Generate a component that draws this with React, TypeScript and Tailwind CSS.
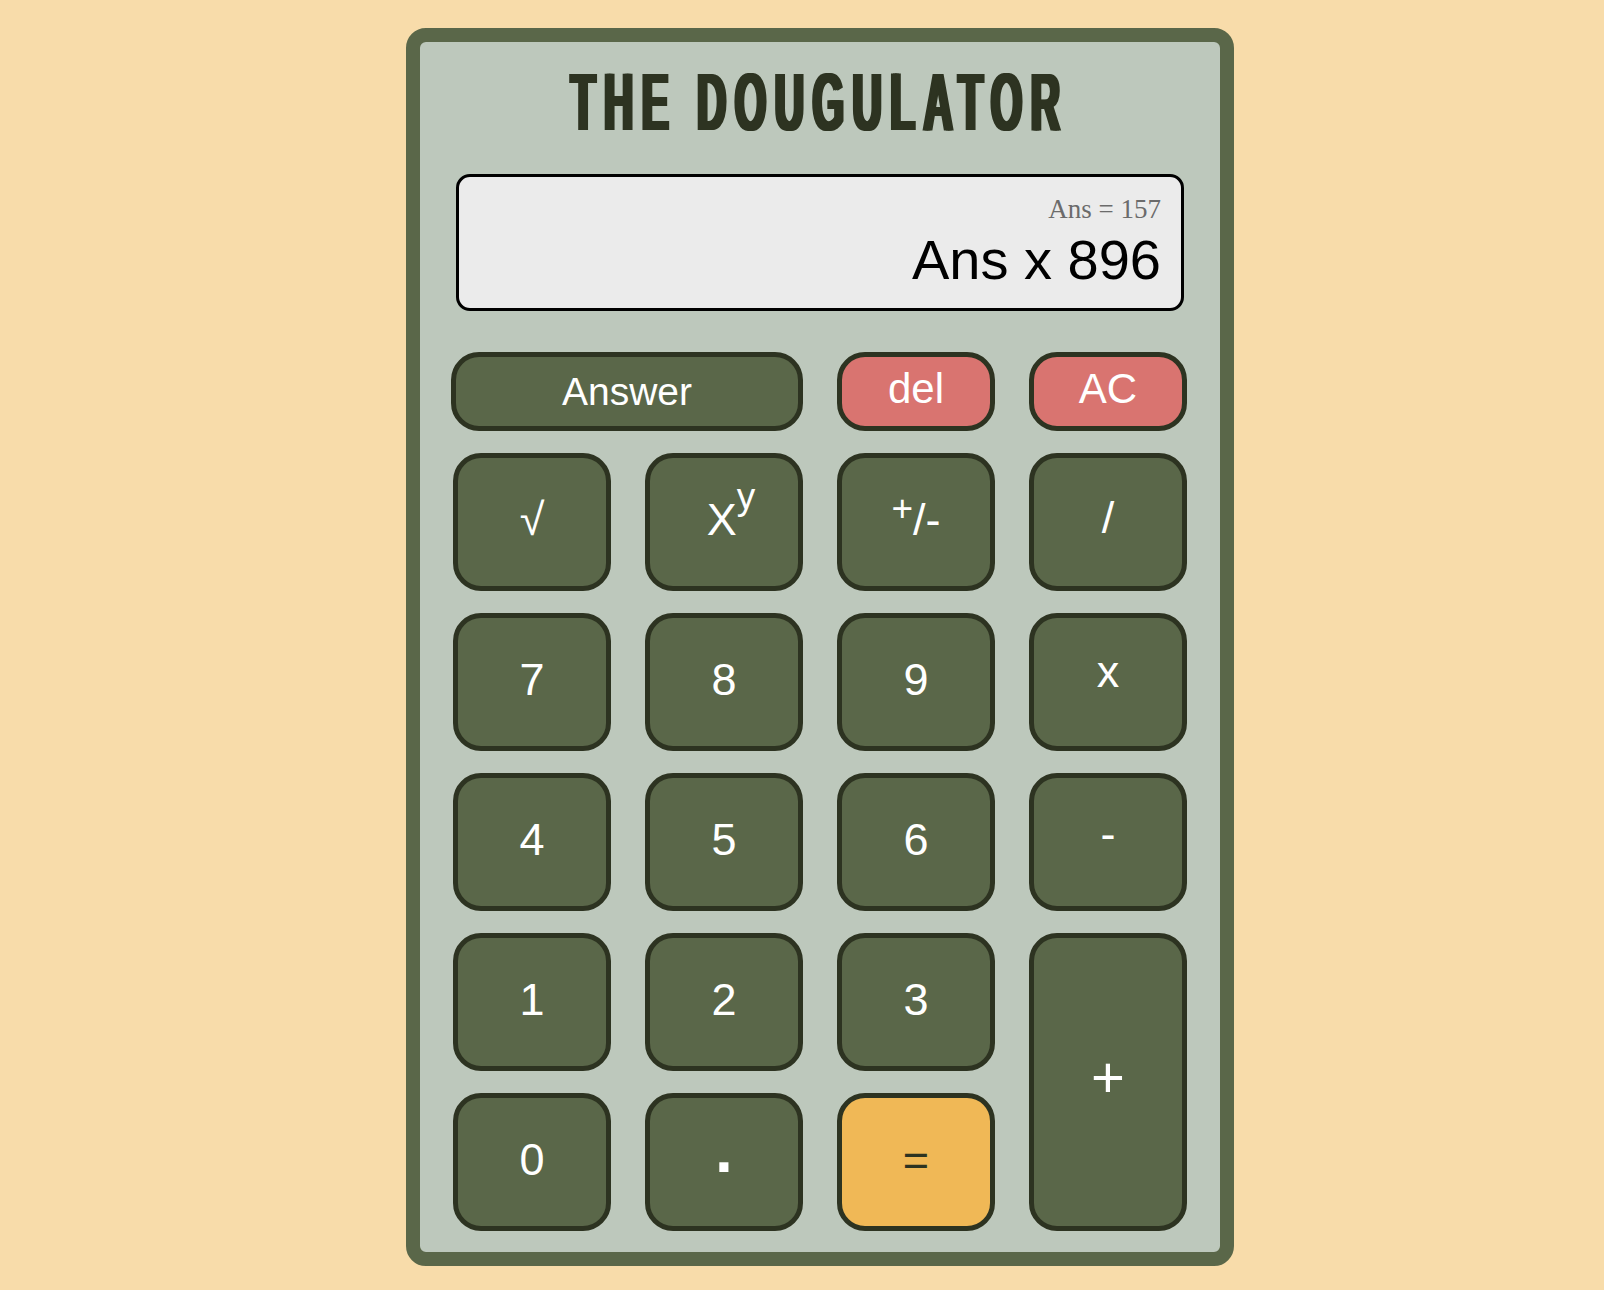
const sans = "font-['Liberation_Sans',Arial,sans-serif]";

const keyBase =
  "flex items-center justify-center rounded-[28px] border-[5px] border-[#2d3321] leading-none " + sans;

type KeyProps = {
  children: React.ReactNode;
  className?: string;
};

const Key = ({ children, className = "" }: KeyProps) => (
  <button className={`${keyBase} ${className}`}>{children}</button>
);

// default dark green key
const green = "bg-[#5a6749] text-white text-[45px]";

const App = () => {
  return (
    <div className="min-h-screen bg-[#f8dcaa] flex justify-center pl-[36px] pt-[28px] pb-[25px]">
      <div className="w-[828px] rounded-[20px] border-[14px] border-[#5a6749] bg-[#bdc8bc] px-[33px] pt-[20px] pb-[21px]">
        {/* Title */}
        <div className="flex justify-center">
          <h1 className="inline-block whitespace-nowrap scale-x-[0.5] font-['Liberation_Sans',Arial,sans-serif] font-bold text-[81px] leading-none tracking-[17px] text-[#2d3321] [text-shadow:4px_0_0_#2d3321,-4px_0_0_#2d3321]">
            THE DOUGULATOR
          </h1>
        </div>

        {/* Display */}
        <div className="mt-[31px] mx-[3px] h-[137px] rounded-[14px] border-[3px] border-black bg-[#ebebeb] flex flex-col items-end pt-[19px] pr-[20px]">
          <div className="font-['Liberation_Serif','Times_New_Roman',serif] text-[27px] leading-none text-[#6b6b6b]">
            Ans = 157
          </div>
          <div className={`mt-[9px] text-[56px] leading-none text-black ${sans}`}>Ans x 896</div>
        </div>

        {/* Keys */}
        <div className="mt-[41px] grid grid-cols-[repeat(4,158px)] grid-rows-[79px_repeat(5,138px)] gap-x-[34px] gap-y-[22px]">
          <Key className="col-span-2 -ml-[2px] bg-[#5a6749] text-white text-[39px]">Answer</Key>
          <Key className="pb-[6px] bg-[#d97470] text-white text-[42px]">del</Key>
          <Key className="pb-[6px] bg-[#d97470] text-white text-[42px]">AC</Key>

          <Key className={`pb-[6px] ${green}`}>√</Key>
          <Key className={`pb-[6px] pl-[14px] ${green}`}>
            <span>
              X<sup className="text-[37px] -top-[26px]">y</sup>
            </span>
          </Key>
          <Key className={`pb-[6px] ${green}`}>
            <span>
              <sup className="text-[37px] -top-[14px]">+</sup>/-
            </span>
          </Key>
          <Key className={`pb-[10px] ${green}`}>/</Key>

          <Key className={`pb-[6px] ${green}`}>7</Key>
          <Key className={`pb-[6px] ${green}`}>8</Key>
          <Key className={`pb-[6px] ${green}`}>9</Key>
          <Key className={`pb-[22px] ${green}`}>x</Key>

          <Key className={`pb-[6px] ${green}`}>4</Key>
          <Key className={`pb-[6px] ${green}`}>5</Key>
          <Key className={`pb-[6px] ${green}`}>6</Key>
          <Key className={`pb-[18px] ${green}`}>-</Key>

          <Key className={`pb-[6px] ${green}`}>1</Key>
          <Key className={`pb-[6px] ${green}`}>2</Key>
          <Key className={`pb-[6px] ${green}`}>3</Key>
          <Key className="row-span-2 pb-[10px] bg-[#5a6749] text-white text-[58px]">+</Key>

          <Key className={`pb-[6px] ${green}`}>0</Key>
          <Key className="pb-[24px] bg-[#5a6749] text-white text-[64px] font-bold">.</Key>
          <Key className="pb-[6px] bg-[#f0b856] text-[#2d3321] text-[45px]">=</Key>
        </div>
      </div>
    </div>
  );
};

export default App;
